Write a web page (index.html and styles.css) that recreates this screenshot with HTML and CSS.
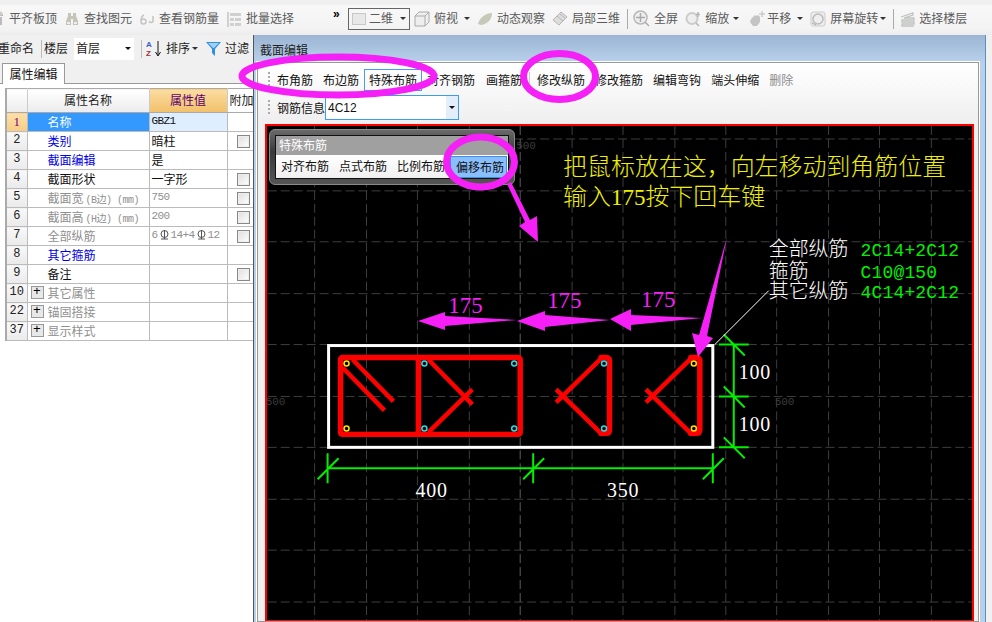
FILE: index.html
```html
<!DOCTYPE html>
<html lang="zh-CN">
<head>
<meta charset="utf-8">
<title>截面编辑</title>
<link rel="stylesheet" href="styles.css">
</head>
<body>
<div class="page">
  <header class="topbar">
    <div class="tool"><svg class="ic" viewBox="0 0 16 16"><path d="M9 3h5v2H9zM10 6h3v8h-3z" fill="#bbb"/><circle cx="11.500" cy="2.500" r="2" fill="#ccc"/></svg><span>平齐板顶</span></div>
    <div class="tool"><svg class="ic" viewBox="0 0 16 16"><path d="M4 2h3v3h2V2h3v3l2 5v4H9V8H7v6H2v-4l2-5z" fill="#c4c4b8"/><path d="M3 11h3v2H3zM10 11h3v2h-3z" fill="#eee"/></svg><span>查找图元</span></div>
    <div class="tool"><svg class="ic" viewBox="0 0 16 16"><circle cx="4.500" cy="10.500" r="2.500" fill="none" stroke="#c4c4c4" stroke-width="1.500"/><path d="M5 4C3 5 2 8 2 10M10 10.500a2.500 2.500 0 0 0 4 0V5" fill="none" stroke="#c4c4c4" stroke-width="1.500"/></svg><span>查看钢筋量</span></div>
    <div class="tool tool-more"><svg class="ic" viewBox="0 0 16 16"><path d="M1 1h2v15H1zM4 2h11v3H4zM4 7h4v3H4zM9 7h6v3H9zM4 12h4v3H4zM9 12h6v3H9z" fill="#d0d0d0"/></svg><span>批量选择</span></div>
    <span class="chevrons">»</span>
    <div class="combo-2d"><span class="swatch"></span><span class="combo-text">二维</span><span class="caret"></span></div>
    <div class="tool"><svg class="ic" viewBox="0 0 16 16"><path d="M1 5l4-4h10v10l-4 4H1zM1 5h10v10M11 5l4-4" fill="#eee" stroke="#aaa"/></svg><span>俯视</span><span class="caret caret-a"></span></div>
    <div class="tool"><svg class="ic" viewBox="0 0 16 16"><path d="M1 13C3 6 9 2 15 2c0 6-4 11-11 12z" fill="#c6c8b8"/></svg><span>动态观察</span></div>
    <div class="tool"><svg class="ic" viewBox="0 0 16 16"><path d="M1 9l8-8 6 5-8 8z" fill="#ddd" stroke="#b5b5b5"/><path d="M5 5l6 5M8 3l5 4" stroke="#b5b5b5"/></svg><span>局部三维</span></div>
    <i class="vsep"></i>
    <div class="tool"><svg class="ic ic-l" viewBox="0 0 17 17"><circle cx="7.500" cy="7.500" r="6.500" fill="#eee" stroke="#b8b8b8" stroke-width="1.500"/><path d="M7.500 3v9M3 7.500h9M12 12l4 4" stroke="#aaa" stroke-width="1.500"/></svg><span>全屏</span></div>
    <div class="tool tool-zoom"><svg class="ic" viewBox="0 0 16 16"><circle cx="7" cy="7.500" r="5.500" fill="#eee" stroke="#ccc" stroke-width="2"/><path d="M11 12l3 3M13 1v5M11 3.500h4" stroke="#b5b5b5" stroke-width="1.500"/></svg><span>缩放</span><span class="caret"></span></div>
    <div class="tool tool-pan"><svg class="ic ic-l" viewBox="0 0 17 17"><path d="M3 9l4-4 1 1 2-1 2 2v5l-3 4H5L2 12z" fill="#c4c4c4"/><path d="M14 1v6M11 4h6" stroke="#bbb"/></svg><span>平移</span><span class="caret caret-p"></span></div>
    <div class="tool"><svg class="ic" viewBox="0 0 16 16"><rect x="1" y="1" width="14" height="14" rx="2" fill="#eee" stroke="#ccc"/><circle cx="8" cy="8" r="5" fill="none" stroke="#bbb" stroke-width="1.500"/><path d="M2 12l4 2" stroke="#aaa"/></svg><span>屏幕旋转</span><span class="caret caret-r"></span></div>
    <i class="vsep"></i>
    <div class="tool"><svg class="ic" viewBox="0 0 16 16"><path d="M2 6l12-4v2L5 7h10v2H3v2h12v2H3v2h12" fill="none" stroke="#c0c4c0" stroke-width="1.300"/></svg><span>选择楼层</span></div>
  </header>

  <main class="workspace">
    <section class="left">
      <div class="leftbar">
        <span class="lb-rename">重命名</span><i class="lsep"></i><span>楼层</span>
        <div class="floor"><span>首层</span><span class="caret caret-d"></span></div>
        <i class="lsep lsep-b"></i>
        <svg class="sort-ic" viewBox="0 0 17 17"><text x="0" y="7" class="az a">A</text><text x="0" y="16" class="az z">Z</text><path d="M12 1v14M9.500 12l2.500 4 2.500-4" stroke="#111" fill="none"/></svg>
        <span class="lb-sort">排序</span><span class="caret caret-s"></span>
        <svg class="filter-ic" viewBox="0 0 15 14"><path d="M0 0h15L9 7v7L6 11V7z" fill="#2f8fe0"/><path d="M2 1h11L8 6H7z" fill="#9fd0f5"/></svg>
        <span class="lb-filter">过滤</span>
      </div>
      <div class="tabstrip"><span class="tab">属性编辑</span></div>
      <div class="gridwrap">
        <table class="props">
          <colgroup><col class="c-num"><col class="c-name"><col class="c-val"><col class="c-ext"></colgroup>
          <thead>
            <tr><th class="num"></th><th>属性名称</th><th class="th-val">属性值</th><th class="th-ext">附加</th></tr>
          </thead>
          <tbody>
            <tr><td class="num num-sel">1</td><td class="name sel">名称</td><td class="val val-sel code">GBZ1</td><td></td></tr>
            <tr><td class="num">2</td><td class="name blue">类别</td><td class="val">暗柱</td><td class="chk"><span class="box"></span></td></tr>
            <tr><td class="num">3</td><td class="name blue">截面编辑</td><td class="val">是</td><td></td></tr>
            <tr><td class="num">4</td><td class="name">截面形状</td><td class="val">一字形</td><td class="chk"><span class="box"></span></td></tr>
            <tr><td class="num">5</td><td class="name grey">截面宽<span class="unit">(B边) (mm)</span></td><td class="val grey code">750</td><td class="chk"><span class="box"></span></td></tr>
            <tr><td class="num">6</td><td class="name grey">截面高<span class="unit">(H边) (mm)</span></td><td class="val grey code">200</td><td class="chk"><span class="box"></span></td></tr>
            <tr><td class="num">7</td><td class="name grey">全部纵筋</td><td class="val grey code">6<svg class="bar-sym" viewBox="0 0 9 11"><circle cx="4.500" cy="5" r="3.500" fill="none" stroke="#555"/><path d="M4.500 1v9M1 10h7" stroke="#555"/></svg>14+4<svg class="bar-sym" viewBox="0 0 9 11"><circle cx="4.500" cy="5" r="3.500" fill="none" stroke="#555"/><path d="M4.500 1v9M1 10h7" stroke="#555"/></svg>12</td><td class="chk"><span class="box"></span></td></tr>
            <tr><td class="num">8</td><td class="name blue">其它箍筋</td><td class="val"></td><td></td></tr>
            <tr><td class="num">9</td><td class="name">备注</td><td class="val"></td><td class="chk"><span class="box"></span></td></tr>
            <tr><td class="num">10</td><td class="name grey grp"><span class="plus">+</span>其它属性</td><td class="val"></td><td></td></tr>
            <tr><td class="num">22</td><td class="name grey grp"><span class="plus">+</span>锚固搭接</td><td class="val"></td><td></td></tr>
            <tr><td class="num">37</td><td class="name grey grp"><span class="plus">+</span>显示样式</td><td class="val"></td><td></td></tr>
          </tbody>
        </table>
      </div>
    </section>

    <section class="right">
      <div class="right-title">截面编辑</div>
      <div class="frame">
        <div class="rtools">
          <i class="grip"></i>
          <span class="rt">布角筋</span>
          <span class="rt rt-b">布边筋</span>
          <span class="rt rt-on">特殊布筋</span>
          <span class="rt rt-c">对齐钢筋</span>
          <span class="rt rt-d">画箍筋</span>
          <i class="rsep"></i>
          <span class="rt">修改纵筋</span>
          <span class="rt">修改箍筋</span>
          <span class="rt">编辑弯钩</span>
          <span class="rt">端头伸缩</span>
          <span class="rt rt-off">删除</span>
        </div>
        <div class="rinfo">
          <i class="grip"></i>
          <span class="info-label">钢筋信息</span>
          <div class="info-select"><span>4C12</span><span class="info-btn"><span class="caret caret-d"></span></span></div>
        </div>
        <div class="canvas">
          <svg class="drawing" viewBox="267 126 705 495">
            <path class="grid" d="M314 126V621M366 126V621M417 126V621M469 126V621M572 126V621M623 126V621M675 126V621M726 126V621M777 126V621M829 126V621M880 126V621M932 126V621M267 139H973M267 191H973M267 242H973M267 294H973M267 345H973M267 397H973M267 448H973M267 500H973M267 551H973M267 603H973"/>
            <path class="grid axis" d="M520 126V621"/>
            <text class="axis-label" x="516" y="149">500</text>
            <text class="axis-label" x="265" y="406">500</text>
            <text class="axis-label" x="775" y="406">500</text>

            <rect class="outline" x="328" y="346" width="385" height="102"/>

            <rect class="hoop" x="340" y="358" width="180" height="77" rx="2"/>
            <path class="hoop" d="M418 358V435"/>
            <path class="tie" d="M352 360L393 402M342 368L384 411M428 360L472 405M428 433L472 390"/>
            <path class="hoop" d="M601 358H606Q609.500 358 609.500 362V430Q609.500 434 606 434H601"/>
            <path class="tie" d="M602 358L556 403M602 435L556 390"/>
            <path class="hoop" d="M691 358H696Q700 358 700 362V430Q700 434 696 434H691"/>
            <path class="tie" d="M692 358L646 403M692 435L646 390"/>
            <g class="dot-y"><circle cx="346" cy="364" r="2.500"/><circle cx="346" cy="429" r="2.500"/><circle cx="694" cy="364" r="2.500"/><circle cx="694" cy="429" r="2.500"/></g>
            <g class="dot-c"><circle cx="424" cy="364" r="2.500"/><circle cx="424" cy="429" r="2.500"/><circle cx="514" cy="364" r="2.500"/><circle cx="514" cy="429" r="2.500"/><circle cx="604" cy="364" r="2.500"/><circle cx="604" cy="429" r="2.500"/></g>

            <path class="dim" d="M734 345V449M719 345H749M719 397H749M719 448H749M724 335L745 356M724 387L745 408M724 438L745 459"/>
            <path class="dim" d="M327 469H714M327 454V484M533 454V484M713 454V484M317 480L338 459M523 480L544 459M703 480L724 459"/>
            <path class="leader" d="M715 345L769 291"/>

            <text class="num-w" x="739" y="380">100</text>
            <text class="num-w" x="739" y="432">100</text>
            <text class="num-w" x="415" y="498">400</text>
            <text class="num-w" x="607" y="498">350</text>

            <text class="note" x="769" y="256">全部纵筋</text>
            <text class="note" x="769" y="278">箍筋</text>
            <text class="note" x="769" y="298">其它纵筋</text>
            <text class="spec" x="861" y="256">2C14+2C12</text>
            <text class="spec" x="861" y="278">C10@150</text>
            <text class="spec" x="861" y="298">4C14+2C12</text>

            <text class="hint" x="563" y="175">把鼠标放在这，向左移动到角筋位置</text>
            <text class="hint" x="563" y="205">输入<tspan class="hint-num">175</tspan>按下回车键</text>

            <text class="mag" x="448" y="313">175</text>
            <text class="mag" x="547" y="308">175</text>
            <text class="mag" x="641" y="307">175</text>
          </svg>
          <div class="float">
            <div class="float-inner">
              <div class="float-title">特殊布筋</div>
              <div class="float-body">
                <span class="fb">对齐布筋</span><span class="fb">点式布筋</span><span class="fb">比例布筋</span><span class="fb fb-on">偏移布筋</span>
              </div>
            </div>
          </div>
        </div>
      </div>
    </section>
  </main>

  <svg class="marks" viewBox="0 0 992 622">
    <ellipse class="ring" cx="338" cy="76" rx="96" ry="19"/>
    <ellipse class="ring" cx="559.500" cy="76.500" rx="36" ry="23"/>
    <ellipse class="ring" cx="480.500" cy="162" rx="34" ry="25"/>
    <polygon class="arrow" points="507,184 511,182 530,220 537,216 538,242 519,226 525,222"/>
    <polygon class="arrow" points="517,320 445,316 445,312 418,321 445,330 445,326"/>
    <polygon class="arrow" points="610,320 545,315 545,311 517,321 545,331 545,327"/>
    <polygon class="arrow" points="702,318 631,315 631,309 610,319 631,331 631,325"/>
    <polygon class="arrow" points="727,237 707,336 713,338 698,357 692,333 699,335"/>
  </svg>
</div>
</body>
</html>
```

FILE: styles.css
```css
* { box-sizing: border-box; }
html, body { margin: 0; padding: 0; height: 100%; overflow: hidden; }
body { font: 12px/1.2 "Noto Sans CJK SC", "Liberation Sans", sans-serif; color: #111; background: #f0f0f0; }
.page { position: relative; width: 992px; height: 622px; display: flex; flex-direction: column; overflow: hidden; }

.topbar { height: 35px; flex: none; padding-bottom: 3px; display: flex; align-items: center; color: #5a5a5a; background: linear-gradient(#f8f8f8, #f3f3f3 80%, #ececec); border-top: 5px solid #f0f0f0; margin-left: -11px; width: 1003px; }
.tool { display: flex; align-items: center; gap: 4px; margin-right: 7px; flex: none; white-space: nowrap; }
.ic { width: 16px; height: 16px; flex: none; }
.ic-l { width: 17px; height: 17px; }
.tool-more { margin-right: 39px; }
.tool-zoom { margin-right: 9px; }
.tool-pan { gap: 2px; }
.chevrons { width: 15px; flex: none; font: bold 12px/1 "Liberation Sans", sans-serif; color: #000; margin-top: -9px; }
.combo-2d { width: 62px; height: 22px; border: 1px solid #666; display: flex; align-items: center; padding-left: 3px; gap: 3px; margin-right: 4px; flex: none; }
.combo-text { white-space: nowrap; flex: none; }
.swatch { width: 14px; height: 12px; background: #e8e8e8; border: 1px solid #c8c8c8; flex: none; }
.caret { width: 0; height: 0; border: 3px solid transparent; border-top: 3px solid #333; border-bottom: 0; display: inline-block; flex: none; }
.combo-2d .caret { margin-left: 4px; }
.caret-a { margin-left: 2px; }
.caret-p { margin-left: 4px; }
.caret-r { margin-left: -2px; }
.caret-s { margin-left: 2px; }
.vsep { width: 1px; height: 20px; background: #aaa; margin-right: 5px; flex: none; }

.workspace { flex: 1; display: flex; min-height: 0; }

.left { width: 254px; flex: none; background: #fff; border-right: 1px solid #555; display: flex; flex-direction: column; overflow: hidden; }
.leftbar { height: 27px; flex: none; display: flex; align-items: center; background: #f0f0f0; white-space: nowrap; color: #222; }
.lb-rename { margin-left: -2px; margin-right: 7px; }
.lsep { width: 1px; height: 18px; background: #bbb; margin-right: 2px; flex: none; }
.lsep-b { margin-right: 4px; }
.floor { width: 60px; height: 22px; margin: 0 7px 0 6px; background: #fff; display: flex; align-items: center; justify-content: space-between; padding: 0 3px 0 2px; flex: none; }
.caret-d { border-top-color: #111; }
.sort-ic { width: 17px; height: 17px; flex: none; }
.az { font: bold 8px "Liberation Sans", sans-serif; }
.a { fill: #3a5fc0; }
.z { fill: #a03030; }
.lb-sort { margin-left: 3px; }
.filter-ic { width: 15px; height: 14px; margin-left: 8px; flex: none; }
.lb-filter { margin-left: 4px; }

.tabstrip { height: 22px; flex: none; padding: 1px 0 0 2px; background: #f0f0f0; border-bottom: 1px solid #999; display: flex; align-items: flex-end; }
.tab { width: 63px; height: 21px; background: #fff; border: 1px solid #999; border-bottom: 0; text-align: center; line-height: 20px; position: relative; top: 1px; }

.gridwrap { flex: 1; padding: 4px 0 0 5px; background: #fff; }
.props { table-layout: fixed; width: 252px; border-collapse: collapse; border-top: 1px solid #aaa; border-left: 2px solid #aaa; }
.c-num { width: 21px; }
.c-name { width: 122px; }
.c-val { width: 78px; }
.c-ext { width: 31px; }
.props th { height: 24px; font-weight: 400; font-size: 12px; text-align: center; background: linear-gradient(#fff, #ececec); border-right: 1px solid #ccc; border-bottom: 1px solid #aaa; color: #222; padding: 0; }
.props th.th-val { background: linear-gradient(#fbdda2, #f2c069); color: #5c0070; }
.props th.th-ext { text-align: left; padding-left: 2px; background: #fff; overflow: hidden; white-space: nowrap; border-right: 0; }
.props td { height: 19px; padding: 2px 0 0; vertical-align: top; border-right: 1px solid #bbb; border-bottom: 1px solid #bbb; white-space: nowrap; overflow: hidden; font-size: 12px; line-height: 13px; }
.props td:last-child { border-right: 0; }
.props td.num { background: linear-gradient(#f8f8f8, #eaeaea); text-align: center; font: 12px/13px "Liberation Mono", monospace; color: #222; }
.props td.num-sel { background: linear-gradient(#fce0a8, #f8cc85); color: #800080; font-family: "Liberation Serif", serif; font-size: 13px; }
.props td.name { padding-left: 20px; }
.props td.grp { padding-left: 3px; }
.sel { background: #3399ff; color: #fff; }
.blue { color: #0000e6; }
.grey { color: #8f8f8f; }
.unit { font-size: 10px; letter-spacing: -0.5px; font-family: "Liberation Mono", "Noto Sans CJK SC", monospace; margin-left: 2px; }
.props td.val { padding-left: 2px; }
.val-sel { background: #deeeff; }
.props td.code { font-family: "Liberation Mono", monospace; font-size: 11px; letter-spacing: -0.6px; }
.bar-sym { width: 9px; height: 11px; margin: 0 2px; vertical-align: -2px; }
.props td.chk { padding: 3px 0 0 9px; }
.box { display: block; width: 13px; height: 13px; border: 1px solid #888; background: linear-gradient(135deg, #ddd, #fff); box-shadow: inset 0 0 0 1px #eee; }
.plus { display: inline-block; width: 13px; height: 13px; margin-right: 4px; border: 1px solid #999; background: #e8e8e8; color: #000; font: 13px/10px "Liberation Mono", monospace; text-align: center; vertical-align: top; }

.right { flex: 1; min-width: 0; background: linear-gradient(#9bb5d3, #b8d0ea 27px); padding: 0 13px 0 3px; position: relative; display: flex; flex-direction: column; }
.right::after { content: ""; position: absolute; top: 0; bottom: 0; right: 0; width: 6px; background: #f0f0f0; border-left: 1px solid #5b8fc4; }
.right-title { height: 27px; flex: none; padding: 8px 0 0 3px; color: #222; }
.frame { flex: 1; min-height: 0; background: linear-gradient(#fff, #f0f0f0 10%); border: 1px solid #999; box-shadow: 0 0 0 1px #fff; display: flex; flex-direction: column; padding: 3px 2px 0 7px; }
.rtools { height: 28px; flex: none; display: flex; align-items: center; white-space: nowrap; }
.grip { width: 2px; height: 16px; flex: none; margin: 0 7px 0 3px; background: repeating-linear-gradient(#aaa 0 2px, transparent 2px 4px); }
.rt { line-height: 20px; margin-right: 10px; color: #111; flex: none; }
.rt-b { margin-right: 5px; }
.rt-on { border: 1px solid #4a9af0; padding: 0 4px; margin-right: 5px; }
.rt-c { margin-right: 11px; }
.rt-d { margin-right: 7px; }
.rsep { width: 1px; height: 16px; background: #ccc; margin-right: 7px; flex: none; }
.rt-off { color: #8c8c8c; }
.rinfo { height: 28px; flex: none; display: flex; align-items: center; }
.info-label { white-space: nowrap; }
.info-select { width: 134px; height: 25px; margin-top: -1px; background: #fff; border: 1px solid #3d9bf5; display: flex; align-items: center; justify-content: space-between; padding-left: 2px; font: 12px "Liberation Sans", sans-serif; }
.info-btn { width: 12px; height: 100%; background: #e4eefa; display: flex; align-items: center; justify-content: center; }
.canvas { flex: 1; min-height: 0; margin: 2px 2px 0 0; background: #000; border: 2px solid #f00; border-bottom-width: 1px; position: relative; }
.drawing { display: block; width: 100%; height: 100%; }
.grid { fill: none; stroke: #3e3e3e; stroke-width: 1; stroke-dasharray: 9 4; }
.axis { stroke: #5e5e5e; }
.axis-label { font: 11px "Liberation Mono", monospace; fill: #3c3c3c; }
.outline { fill: none; stroke: #fff; stroke-width: 3; }
.hoop { fill: none; stroke: #f00; stroke-width: 5.5; stroke-linejoin: round; stroke-linecap: round; }
.tie { fill: none; stroke: #f00; stroke-width: 4.5; }
.dot-y circle { fill: none; stroke: #ffe600; stroke-width: 1.5; }
.dot-c circle { fill: none; stroke: #22e0e8; stroke-width: 1.5; }
.dim { fill: none; stroke: #00f000; stroke-width: 2; }
.leader { stroke: #fff; stroke-width: 1; }
.num-w { font: 20px "Liberation Serif", serif; fill: #fff; letter-spacing: 0.8px; }
.note { font: 300 20px "Noto Sans CJK SC", sans-serif; fill: #fff; }
.spec { font: 18px "Liberation Mono", monospace; fill: #00f000; letter-spacing: 0.2px; }
.hint { font: 300 24px "Noto Sans CJK SC", sans-serif; fill: #f0f000; }
.hint-num { font: 23px "Liberation Serif", serif; }
.mag { font: 23px "Liberation Serif", serif; fill: #f520f5; }

.float { position: absolute; left: 2px; top: 3px; width: 246px; height: 56px; border-radius: 6px; background: linear-gradient(#6a6a6a, #3a3a3a 40%, #555); border: 1px solid #8a8a8a; padding: 5px; }
.float-inner { border: 1px solid #111; height: 100%; display: flex; flex-direction: column; }
.float-title { height: 19px; background: #a0a0a0; color: #fff; padding-left: 3px; line-height: 18px; flex: none; }
.float-body { flex: 1; background: linear-gradient(#fff, #f0f0f0); display: flex; align-items: center; padding-left: 5px; white-space: nowrap; }
.fb { margin-right: 10px; flex: none; }
.fb-on { margin: 0 0 0 -5px; padding: 0 2px 0 5px; background: #8abfff; border: 1px solid #3d8fe8; line-height: 20px; }

.marks { position: absolute; inset: 0; width: 992px; height: 622px; pointer-events: none; }
.ring { fill: none; stroke: #f520f5; stroke-width: 7; }
.arrow { fill: #f520f5; }
```
